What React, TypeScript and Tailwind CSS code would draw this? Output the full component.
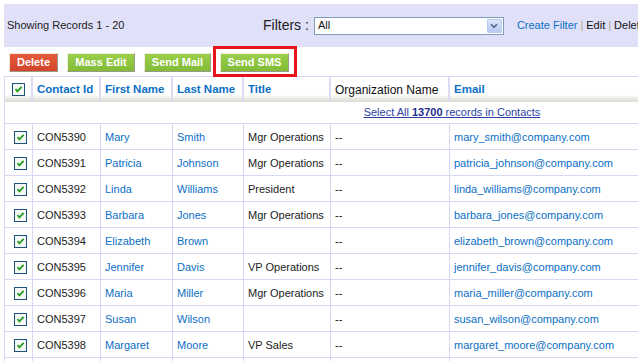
import React from 'react';

interface Contact {
  id: string;
  first: string;
  last: string;
  title: string;
  org: string;
  email: string;
}

const contacts: Contact[] = [
  { id: 'CON5390', first: 'Mary', last: 'Smith', title: 'Mgr Operations', org: '--', email: 'mary_smith@company.com' },
  { id: 'CON5391', first: 'Patricia', last: 'Johnson', title: 'Mgr Operations', org: '--', email: 'patricia_johnson@company.com' },
  { id: 'CON5392', first: 'Linda', last: 'Williams', title: 'President', org: '--', email: 'linda_williams@company.com' },
  { id: 'CON5393', first: 'Barbara', last: 'Jones', title: 'Mgr Operations', org: '--', email: 'barbara_jones@company.com' },
  { id: 'CON5394', first: 'Elizabeth', last: 'Brown', title: '', org: '--', email: 'elizabeth_brown@company.com' },
  { id: 'CON5395', first: 'Jennifer', last: 'Davis', title: 'VP Operations', org: '--', email: 'jennifer_davis@company.com' },
  { id: 'CON5396', first: 'Maria', last: 'Miller', title: 'Mgr Operations', org: '--', email: 'maria_miller@company.com' },
  { id: 'CON5397', first: 'Susan', last: 'Wilson', title: '', org: '--', email: 'susan_wilson@company.com' },
  { id: 'CON5398', first: 'Margaret', last: 'Moore', title: 'VP Sales', org: '--', email: 'margaret_moore@company.com' },
  { id: 'CON5399', first: 'Dorothy', last: 'Taylor', title: 'VP Sales', org: '--', email: 'dorothy_taylor@company.com' },
];

// grid columns shared by header and rows
const cols = 'grid grid-cols-[28px_68px_72px_71px_87px_119px_451px]';

/** Small checked checkbox, old XP style */
const CheckBox = () => (
  <svg width="13" height="13" viewBox="0 0 13 13" className="block">
    <rect x="0.5" y="0.5" width="12" height="12" fill="#f4f4f0" stroke="#1c5180" />
    <rect x="1.5" y="1.5" width="10" height="10" fill="#f8f8f6" />
    <path d="M3.5 6.2 L5.4 8.3 L9.6 3.8" fill="none" stroke="#21a121" strokeWidth="1.8" />
  </svg>
);

const ActionButton = ({ label, width, red }: { label: string; width: string; red?: boolean }) => (
  <button
    className={
      'block h-[19px] border border-t-[#f2ecdc] border-l-[#f2ecdc] border-r-[#9a9a8a] border-b-[#9a9a8a] text-[11px] font-bold text-white leading-none ' +
      width +
      (red
        ? ' bg-[linear-gradient(to_bottom,#e65a3c,#d2452a)]'
        : ' bg-[linear-gradient(to_bottom,#9bcf4c,#82bb36)]')
    }
  >
    {label}
  </button>
);

const HeaderCell = ({ children, blue = true }: { children: React.ReactNode; blue?: boolean }) => (
  <div
    className={
      'h-[25px] flex items-center pl-[4px] border-r-2 border-[#dcdcf6] bg-[linear-gradient(to_bottom,#ffffff_0%,#ffffff_72%,#ebebe6_84%,#dcdcd6_100%)] whitespace-nowrap overflow-hidden ' +
      (blue ? 'text-[11.5px] font-bold text-[#0b6fc5]' : 'text-[12px] text-[#111]')
    }
  >
    {children}
  </div>
);

const Cell = ({ children, className = '' }: { children?: React.ReactNode; className?: string }) => (
  <div
    className={
      'h-[26px] flex items-center pl-[4px] pt-[1px] border-r border-b border-[#d8d8f4] text-[11px] whitespace-nowrap overflow-hidden ' +
      className
    }
  >
    {children}
  </div>
);

export default function App() {
  return (
    <div className="w-[638px] h-[361px] overflow-hidden bg-white p-1 font-['Liberation_Sans',Arial,sans-serif]">
      {/* top bar */}
      <div className="w-[900px] h-[43px] bg-[#e0e1f9] flex items-center pl-[3px]">
        <span className="w-[256px] text-[11px] text-[#222]">Showing Records 1 - 20</span>
        <span className="text-[14px] text-[#1a1a1a]">Filters :</span>
        <div className="ml-[5px] w-[190px] h-[18px] border border-[#7f9db9] bg-white flex items-center">
          <span className="flex-1 pl-[3px] text-[11px] text-[#111]">All</span>
          <span className="w-[15px] h-[14px] mr-[1px] rounded-[1px] border border-[#b9cbee] bg-[linear-gradient(to_bottom,#dbe5fb,#b7caf2)] flex items-center justify-center">
            <svg width="8" height="6" viewBox="0 0 8 6">
              <path d="M1 1.2 L4 4.2 L7 1.2" fill="none" stroke="#4d6185" strokeWidth="1.6" />
            </svg>
          </span>
        </div>
        <div className="ml-[13px] text-[11px] whitespace-nowrap">
          <span className="text-[#0b6fc5]">Create Filter</span>
          <span className="text-[#b0a488] mx-[3px]">|</span>
          <span className="text-[#111]">Edit</span>
          <span className="text-[#b0a488] mx-[3px]">|</span>
          <span className="text-[#111]">Delete</span>
        </div>
      </div>

      {/* action buttons */}
      <div className="flex items-center gap-[9px] pl-[5px] mt-[6px] h-[19px]">
        <ActionButton label="Delete" width="w-[49px]" red />
        <ActionButton label="Mass Edit" width="w-[68px]" />
        <ActionButton label="Send Mail" width="w-[67px]" />
        <div className="relative flex">
          <ActionButton label="Send SMS" width="w-[69px]" />
          <span className="absolute -left-[7px] -top-[7px] -right-[8px] -bottom-[5px] border-[3px] border-[#e8141b] pointer-events-none" />
        </div>
      </div>

      {/* table */}
      <div className="mt-[4px] w-[896px] border-l border-t border-[#d8d8f4]">
        <div className={cols}>
          <div className="h-[25px] flex items-center justify-center border-r-2 border-[#dcdcf6] bg-[linear-gradient(to_bottom,#ffffff_0%,#ffffff_72%,#ebebe6_84%,#dcdcd6_100%)]">
            <CheckBox />
          </div>
          <HeaderCell>Contact Id</HeaderCell>
          <HeaderCell>First Name</HeaderCell>
          <HeaderCell>Last Name</HeaderCell>
          <HeaderCell>Title</HeaderCell>
          <HeaderCell blue={false}>Organization Name</HeaderCell>
          <HeaderCell>Email</HeaderCell>
        </div>

        <div className="h-[22px] flex items-center justify-center border-b border-r border-[#d8d8f4] text-[11px] text-[#2b3fa3] underline">
          Select All&nbsp;<b className="text-[#1d2f8a]">13700</b>&nbsp;records in Contacts
        </div>

        {contacts.map((c) => (
          <div key={c.id} className={cols}>
            <Cell className="justify-center pl-0 pt-0">
              <CheckBox />
            </Cell>
            <Cell className="text-[#222]">{c.id}</Cell>
            <Cell className="text-[#0b6fc5]">{c.first}</Cell>
            <Cell className="text-[#0b6fc5]">{c.last}</Cell>
            <Cell className="text-[#222]">{c.title}</Cell>
            <Cell className="text-[#111]">{c.org}</Cell>
            <Cell className="text-[#0b6fc5]">{c.email}</Cell>
          </div>
        ))}
      </div>
    </div>
  );
}
